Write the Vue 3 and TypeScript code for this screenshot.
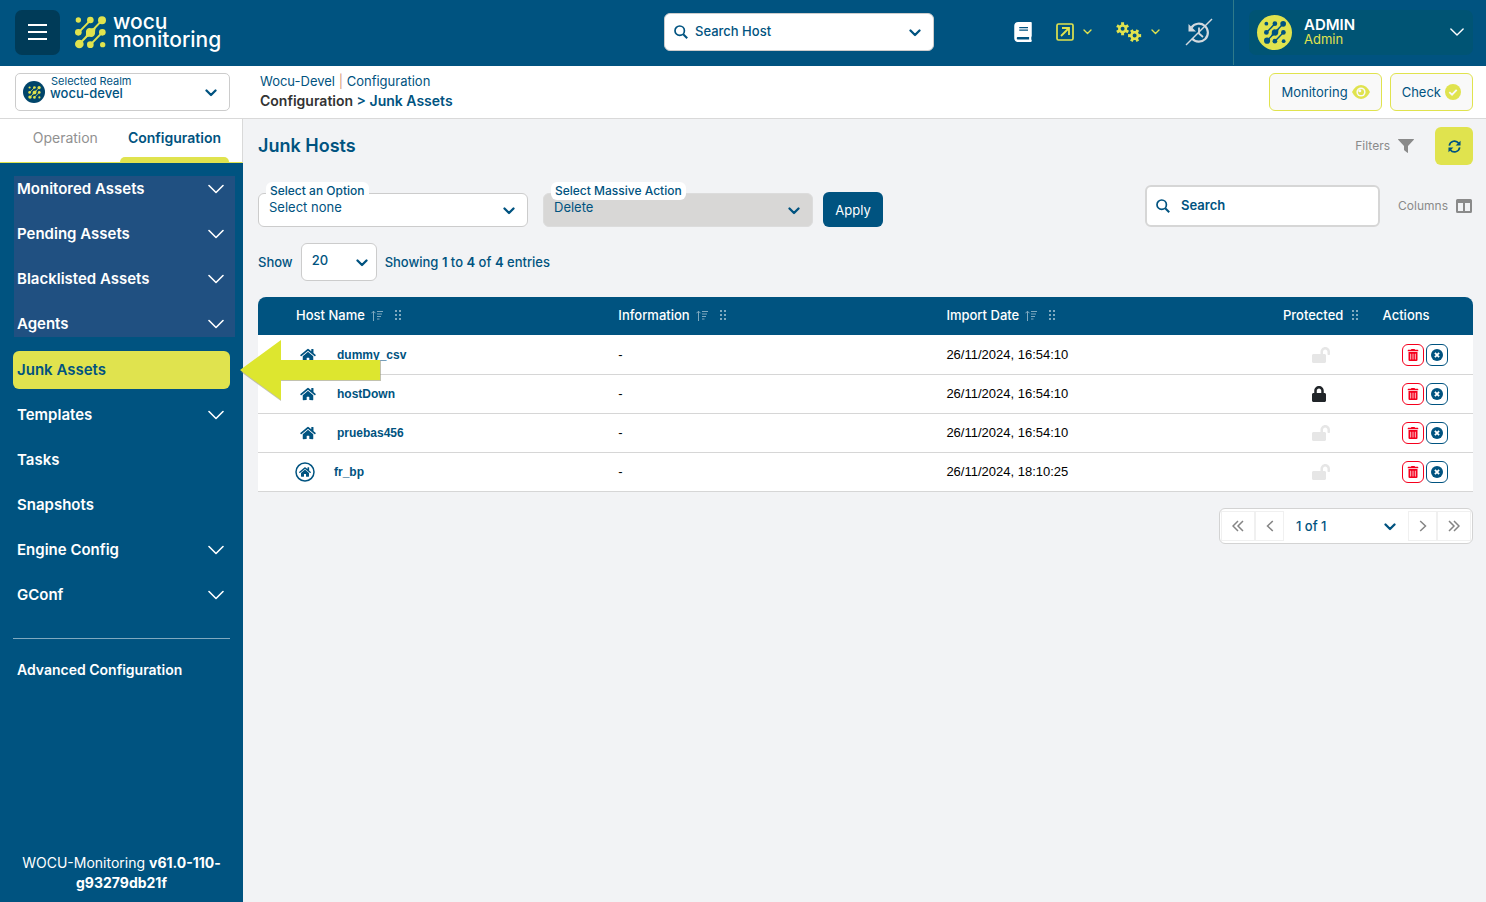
<script setup lang="ts">
import { ref } from 'vue'

interface MenuItem {
  label: string
  expandable: boolean
}
interface HostRow {
  name: string
  info: string
  date: string
  locked: boolean
  group: boolean
}
interface Column {
  label: string
  sortable: boolean
  draggable: boolean
}

const assetItems: MenuItem[] = [
  { label: 'Monitored Assets', expandable: true },
  { label: 'Pending Assets', expandable: true },
  { label: 'Blacklisted Assets', expandable: true },
  { label: 'Agents', expandable: true },
]
const otherItems: MenuItem[] = [
  { label: 'Templates', expandable: true },
  { label: 'Tasks', expandable: false },
  { label: 'Snapshots', expandable: false },
  { label: 'Engine Config', expandable: true },
  { label: 'GConf', expandable: true },
]
const columns: Column[] = [
  { label: 'Host Name', sortable: true, draggable: true },
  { label: 'Information', sortable: true, draggable: true },
  { label: 'Import Date', sortable: true, draggable: true },
  { label: 'Protected', sortable: false, draggable: true },
  { label: 'Actions', sortable: false, draggable: false },
]
const rows: HostRow[] = [
  { name: 'dummy_csv', info: '-', date: '26/11/2024, 16:54:10', locked: false, group: false },
  { name: 'hostDown', info: '-', date: '26/11/2024, 16:54:10', locked: true, group: false },
  { name: 'pruebas456', info: '-', date: '26/11/2024, 16:54:10', locked: false, group: false },
  { name: 'fr_bp', info: '-', date: '26/11/2024, 18:10:25', locked: false, group: true },
]

const search = ref('')

function gear(cx: number, cy: number, outer: number, inner: number, hole: number, phase: number): string {
  const teeth = 6
  const step = (Math.PI * 2) / teeth
  const pts: string[] = []
  for (let i = 0; i < teeth; i++) {
    const a = i * step + phase
    const corners: [number, number][] = [
      [inner, -0.3], [outer, -0.22], [outer, 0.22], [inner, 0.3],
    ]
    for (const [r, k] of corners) {
      const t = a + k * step
      pts.push(`${(cx + r * Math.cos(t)).toFixed(2)} ${(cy + r * Math.sin(t)).toFixed(2)}`)
    }
  }
  return `M${pts.join('L')}Z M${cx - hole} ${cy}a${hole} ${hole} 0 1 0 ${hole * 2} 0a${hole} ${hole} 0 1 0 ${-hole * 2} 0Z`
}
const gears = gear(6.6, 6.8, 6.7, 4.6, 2, 0.52) + gear(18.6, 13.6, 6.7, 4.6, 2, 0)
</script>

<template>
  <div class="app">
    <svg class="sprite" aria-hidden="true">
      <symbol id="mark" viewBox="0 0 93 97">
        <g stroke="currentColor" stroke-width="6" fill="none">
          <path d="M46 12 11 48M81 12 13 83M82 48 47 84" />
        </g>
        <g fill="currentColor">
          <circle cx="10" cy="11" r="8" />
          <circle cx="46" cy="11" r="10" />
          <circle cx="81" cy="12" r="12" />
          <circle cx="10" cy="48" r="10" />
          <path d="M33 45Q34 36 44 35Q56 37 62 32Q60 44 60 52Q58 61 49 62Q38 60 31 65Q34 55 33 45Z" />
          <circle cx="82" cy="48" r="10" />
          <circle cx="13" cy="83" r="13" />
          <circle cx="46" cy="85" r="10" />
          <circle cx="83" cy="85" r="8" />
        </g>
      </symbol>
      <symbol id="chev" viewBox="0 0 16 10">
        <path d="M1 1.5 8 8.5 15 1.5" fill="none" stroke="currentColor" stroke-width="1.6" stroke-linecap="round" stroke-linejoin="round" />
      </symbol>
      <symbol id="chev-mini" viewBox="0 0 9 6">
        <path d="M1 1 4.5 4.5 8 1" fill="none" stroke="currentColor" stroke-width="1.4" stroke-linecap="round" stroke-linejoin="round" />
      </symbol>
      <symbol id="chev-bold" viewBox="0 0 12 8">
        <path d="M1.5 1.5 6 6 10.5 1.5" fill="none" stroke="currentColor" stroke-width="2.3" stroke-linecap="round" stroke-linejoin="round" />
      </symbol>
      <symbol id="lens" viewBox="0 0 14 14">
        <circle cx="5.7" cy="5.7" r="4.7" fill="none" stroke="currentColor" stroke-width="1.7" />
        <path d="M9.2 9.2 13.2 13.2" stroke="currentColor" stroke-width="2" />
      </symbol>
      <symbol id="book" viewBox="0 0 448 512">
        <path fill="currentColor" d="M448 360V24c0-13.3-10.7-24-24-24H96C43 0 0 43 0 96v320c0 53 43 96 96 96h328c13.3 0 24-10.7 24-24v-16c0-7.5-3.5-14.3-8.9-18.7-4.2-15.4-4.2-59.3 0-74.7 5.4-4.3 8.9-11.1 8.9-18.6zM128 134c0-3.3 2.7-6 6-6h212c3.3 0 6 2.7 6 6v20c0 3.3-2.7 6-6 6H134c-3.3 0-6-2.7-6-6v-20zm0 64c0-3.3 2.7-6 6-6h212c3.3 0 6 2.7 6 6v20c0 3.3-2.7 6-6 6H134c-3.3 0-6-2.7-6-6v-20zm253.4 250H96c-17.7 0-32-14.3-32-32 0-17.6 14.4-32 32-32h285.4c-1.9 17.1-1.9 46.9 0 64z" />
      </symbol>
      <symbol id="external" viewBox="0 0 18 18">
        <rect x="1" y="1" width="16" height="16" rx="1.5" fill="none" stroke="currentColor" stroke-width="1.7" />
        <path d="M5 13 12.5 5.5M6 5h7v7" fill="none" stroke="currentColor" stroke-width="1.8" />
      </symbol>
      <symbol id="gears" viewBox="0 0 26 21">
        <path :d="gears" fill="currentColor" fill-rule="evenodd" />
      </symbol>
      <symbol id="history" viewBox="0 0 28 28">
        <path d="M6.5 9.5A9 9 0 1 1 7 20.5" fill="none" stroke="currentColor" stroke-width="2.2" />
        <path d="M3.5 6v7.500H11Z" fill="currentColor" />
        <path d="M14 9.5v6l4 3.5" fill="none" stroke="currentColor" stroke-width="1.8" />
        <path d="M1 27 27 1" stroke="currentColor" stroke-width="1.5" />
      </symbol>
      <symbol id="eye" viewBox="0 0 18 14">
        <path d="M0 7Q3.5 0 9 0T18 7Q14.5 14 9 14T0 7Z" fill="currentColor" />
        <circle cx="9" cy="7" r="4.6" fill="#f9f9f9" />
        <circle cx="9" cy="7" r="3.1" fill="currentColor" />
        <circle cx="7.8" cy="5.800" r="1.5" fill="#f9f9f9" />
      </symbol>
      <symbol id="check" viewBox="0 0 16 16">
        <circle cx="8" cy="8" r="8" fill="currentColor" />
        <path d="M4.3 8.2 7 10.7 11.7 5.8" fill="none" stroke="#f9f9f9" stroke-width="1.8" />
      </symbol>
      <symbol id="funnel" viewBox="0 0 16 14">
        <path d="M.5 0h15q.8 0 .3.8L10 7v6.5q0 .7-.6.3L6.500 11.500Q6 11 6 10.500V7L.2.8Q-.3 0 .5 0Z" fill="currentColor" />
      </symbol>
      <symbol id="sync" viewBox="0 0 14 14">
        <path d="M1.4 6A5.6 5.6 0 0 1 11.5 3.6M12.6 8A5.6 5.6 0 0 1 2.5 10.4" fill="none" stroke="currentColor" stroke-width="1.8" />
        <path d="M13.5.7V6H8.200ZM.5 13.300V8h5.300Z" fill="currentColor" />
      </symbol>
      <symbol id="columns" viewBox="0 0 16 14">
        <path fill-rule="evenodd" fill="currentColor" d="M1.5 0h13Q16 0 16 1.5v11q0 1.500-1.500 1.500h-13Q0 14 0 12.500v-11Q0 0 1.500 0ZM2 4v8h5V4ZM9 4v8h5V4Z" />
      </symbol>
      <symbol id="sort" viewBox="0 0 12 11">
        <path d="M2.5 11V1.2M.4 3.3 2.5 1.2 4.6 3.3M6 1.5h6M6 4h5M6 6.500h4M6 9h2.500" fill="none" stroke="currentColor" />
      </symbol>
      <symbol id="grip" viewBox="0 0 7 10">
        <path d="M0 0h2v2H0zM4 0h2v2H4zM0 4h2v2H0zM4 4h2v2H4zM0 8h2v2H0zM4 8h2v2H4z" fill="currentColor" />
      </symbol>
      <symbol id="home" viewBox="0 0 576 512">
        <path fill="currentColor" d="M280.37 148.26L96 300.11V464a16 16 0 0 0 16 16l112.06-.29a16 16 0 0 0 15.92-16V368a16 16 0 0 1 16-16h64a16 16 0 0 1 16 16v95.64a16 16 0 0 0 16 16.05L464 480a16 16 0 0 0 16-16V300L295.67 148.26a12.19 12.19 0 0 0-15.3 0zM571.6 251.47L488 182.56V44.05a12 12 0 0 0-12-12h-56a12 12 0 0 0-12 12v72.61L318.47 43a48 48 0 0 0-61 0L4.34 251.47a12 12 0 0 0-1.6 16.9l25.5 31A12 12 0 0 0 45.15 301l235.22-193.74a12.19 12.19 0 0 1 15.3 0L530.9 301a12 12 0 0 0 16.9-1.6l25.5-31a12 12 0 0 0-1.7-16.93z" />
      </symbol>
      <symbol id="home-group" viewBox="0 0 20 20">
        <circle cx="10" cy="10" r="9" fill="none" stroke="currentColor" stroke-width="1.5" />
        <use href="#home" x="4" y="4.5" width="12" height="11" />
      </symbol>
      <symbol id="lock" viewBox="0 0 448 512">
        <path fill="currentColor" d="M400 224h-24v-72C376 68.2 307.8 0 224 0S72 68.2 72 152v72H48c-26.5 0-48 21.5-48 48v192c0 26.5 21.5 48 48 48h352c26.5 0 48-21.5 48-48V272c0-26.5-21.5-48-48-48zm-104 0H152v-72c0-39.7 32.3-72 72-72s72 32.3 72 72v72z" />
      </symbol>
      <symbol id="unlock" viewBox="0 0 576 512">
        <path fill="currentColor" d="M423.5 0C339.5.3 272 69.5 272 153.5V224H48c-26.5 0-48 21.5-48 48v192c0 26.5 21.5 48 48 48h352c26.5 0 48-21.5 48-48V272c0-26.5-21.5-48-48-48h-48v-71.1c0-39.6 31.7-72.5 71.3-72.9 40-.4 72.7 32.1 72.7 72v80c0 13.3 10.7 24 24 24h32c13.3 0 24-10.7 24-24v-80C576 68 507.5-.3 423.5 0z" />
      </symbol>
      <symbol id="trash" viewBox="0 0 448 512">
        <path fill="currentColor" d="M32 464a48 48 0 0 0 48 48h288a48 48 0 0 0 48-48V128H32zm272-256a16 16 0 0 1 32 0v224a16 16 0 0 1-32 0zm-96 0a16 16 0 0 1 32 0v224a16 16 0 0 1-32 0zm-96 0a16 16 0 0 1 32 0v224a16 16 0 0 1-32 0zM432 32H312l-9.4-18.7A24 24 0 0 0 281.1 0H166.8a23.72 23.72 0 0 0-21.4 13.3L136 32H16A16 16 0 0 0 0 48v32a16 16 0 0 0 16 16h416a16 16 0 0 0 16-16V48a16 16 0 0 0-16-16z" />
      </symbol>
      <symbol id="cross" viewBox="0 0 12 12">
        <circle cx="6" cy="6" r="6" fill="currentColor" />
        <path d="M3.9 3.9 8.1 8.1M8.1 3.9 3.9 8.1" stroke="#fff" stroke-width="1.8" />
      </symbol>
      <symbol id="prev" viewBox="0 0 8 12">
        <path d="M6.8 1 1.5 6 6.8 11" fill="none" stroke="currentColor" stroke-width="1.5" />
      </symbol>
      <symbol id="next" viewBox="0 0 8 12">
        <path d="M1.2 1 6.5 6 1.2 11" fill="none" stroke="currentColor" stroke-width="1.5" />
      </symbol>
      <symbol id="first" viewBox="0 0 12 12">
        <path d="M6 1 1 6 6 11M11 1 6 6 11 11" fill="none" stroke="currentColor" stroke-width="1.5" />
      </symbol>
      <symbol id="last" viewBox="0 0 12 12">
        <path d="M6 1 11 6 6 11M1 1 6 6 1 11" fill="none" stroke="currentColor" stroke-width="1.5" />
      </symbol>
    </svg>

    <header class="topbar">
      <button class="burger" type="button" aria-label="Toggle menu"><span /><span /><span /></button>
      <a class="brand" href="#">
        <svg class="brand-mark"><use href="#mark" /></svg>
        <span class="brand-text">wocu<br />monitoring</span>
      </a>
      <div class="field host-search">
        <svg class="lens"><use href="#lens" /></svg>
        <select aria-label="Search Host"><option>Search Host</option></select>
        <svg class="caret"><use href="#chev-bold" /></svg>
      </div>
      <nav class="tools">
        <button type="button" aria-label="Documentation"><svg class="i-book"><use href="#book" /></svg></button>
        <button class="lime tool-ext" type="button" aria-label="Links">
          <svg class="i-ext"><use href="#external" /></svg><svg class="i-mini"><use href="#chev-mini" /></svg>
        </button>
        <button class="lime tool-gears" type="button" aria-label="Settings">
          <svg class="i-gears"><use href="#gears" /></svg><svg class="i-mini"><use href="#chev-mini" /></svg>
        </button>
        <button class="pale tool-history" type="button" aria-label="History"><svg class="i-history"><use href="#history" /></svg></button>
      </nav>
      <div class="account">
        <button class="user" type="button">
          <span class="avatar"><svg><use href="#mark" /></svg></span>
          <span class="user-text"><strong>ADMIN</strong><span>Admin</span></span>
          <svg class="i-chev"><use href="#chev" /></svg>
        </button>
      </div>
    </header>

    <div class="subbar">
      <div class="field realm">
        <span class="realm-badge"><svg><use href="#mark" /></svg></span>
        <label for="realm">Selected Realm</label>
        <select id="realm"><option>wocu-devel</option></select>
        <svg class="caret"><use href="#chev-bold" /></svg>
      </div>
      <div class="crumbs">
        <div class="crumb-top"><a href="#">Wocu-Devel</a> <i>|</i> <a href="#">Configuration</a></div>
        <div class="crumb-path"><span>Configuration</span> &gt; <a href="#">Junk Assets</a></div>
      </div>
      <button class="outline" type="button">Monitoring <svg class="i-eye"><use href="#eye" /></svg></button>
      <button class="outline" type="button">Check <svg class="i-check"><use href="#check" /></svg></button>
    </div>

    <div class="body">
      <aside class="sidebar">
        <div class="tabs">
          <button class="tab" type="button">Operation</button>
          <button class="tab active" type="button">Configuration</button>
        </div>
        <nav class="menu">
          <div class="menu-group marked">
            <a v-for="item in assetItems" :key="item.label" class="menu-item" href="#">
              {{ item.label }}
              <svg v-if="item.expandable" class="i-chev"><use href="#chev" /></svg>
            </a>
          </div>
          <a class="menu-item current" href="#">
            Junk Assets
            <svg class="pointer" viewBox="0 0 141 62">
              <path d="M1 32 41 1V21H141V41H41V61Z" fill="#9a9a78" opacity=".6" />
              <path d="M0 30 41 0V20H140V40H41V60Z" fill="#dde62f" />
            </svg>
          </a>
          <a v-for="item in otherItems" :key="item.label" class="menu-item" href="#">
            {{ item.label }}
            <svg v-if="item.expandable" class="i-chev"><use href="#chev" /></svg>
          </a>
        </nav>
        <hr />
        <a class="advanced" href="#">Advanced Configuration</a>
        <p class="version">WOCU-Monitoring <b>v61.0-110-g93279db21f</b></p>
      </aside>

      <main class="main">
        <div class="title-row">
          <h1>Junk Hosts</h1>
          <button class="ghost filters" type="button">Filters <svg class="i-16"><use href="#funnel" /></svg></button>
          <button class="refresh" type="button" aria-label="Refresh"><svg><use href="#sync" /></svg></button>
        </div>

        <div class="controls">
          <div class="field option">
            <label for="pick">Select an Option</label>
            <select id="pick"><option>Select none</option></select>
            <svg class="caret"><use href="#chev-bold" /></svg>
          </div>
          <div class="field option massive">
            <label for="massive">Select Massive Action</label>
            <select id="massive"><option>Delete</option></select>
            <svg class="caret"><use href="#chev-bold" /></svg>
          </div>
          <button class="apply" type="button">Apply</button>
          <div class="field finder">
            <svg class="lens"><use href="#lens" /></svg>
            <input v-model="search" type="text" placeholder="Search" aria-label="Search" />
          </div>
          <button class="ghost cols" type="button">Columns <svg class="i-16"><use href="#columns" /></svg></button>
        </div>

        <div class="show-row">
          <label for="size">Show</label>
          <div class="field size">
            <select id="size"><option>20</option></select>
            <svg class="caret"><use href="#chev-bold" /></svg>
          </div>
          <span>Showing <b>1</b> to <b>4</b> of <b>4</b> entries</span>
        </div>

        <table>
          <colgroup><col class="c1" /><col class="c2" /><col class="c3" /><col class="c4" /><col class="c5" /></colgroup>
          <thead>
            <tr>
              <th v-for="col in columns" :key="col.label" scope="col">
                <span class="th">
                  {{ col.label }}
                  <svg v-if="col.sortable" class="i-sort"><use href="#sort" /></svg>
                  <svg v-if="col.draggable" class="i-grip"><use href="#grip" /></svg>
                </span>
              </th>
            </tr>
          </thead>
          <tbody>
            <tr v-for="row in rows" :key="row.name">
              <td>
                <a class="host" :class="{ group: row.group }" href="#">
                  <svg><use :href="row.group ? '#home-group' : '#home'" /></svg>{{ row.name }}
                </a>
              </td>
              <td>{{ row.info }}</td>
              <td>{{ row.date }}</td>
              <td class="protect">
                <svg v-if="row.locked" class="i-lock"><use href="#lock" /></svg>
                <svg v-else class="i-unlock"><use href="#unlock" /></svg>
              </td>
              <td>
                <div class="acts">
                  <button class="del" type="button" aria-label="Delete"><svg><use href="#trash" /></svg></button>
                  <button class="rem" type="button" aria-label="Remove"><svg><use href="#cross" /></svg></button>
                </div>
              </td>
            </tr>
          </tbody>
        </table>

        <div class="pager">
          <button type="button" class="edge" aria-label="First page"><svg class="w12"><use href="#first" /></svg></button>
          <button type="button" aria-label="Previous page"><svg><use href="#prev" /></svg></button>
          <div class="field page">
            <select aria-label="Page"><option>1 of 1</option></select>
            <svg class="caret"><use href="#chev-bold" /></svg>
          </div>
          <button type="button" aria-label="Next page"><svg><use href="#next" /></svg></button>
          <button type="button" class="edge" aria-label="Last page"><svg class="w12"><use href="#last" /></svg></button>
        </div>
      </main>
    </div>
  </div>
</template>

<style>
body {
  margin: 0;
  background: #f2f3f5;
}
</style>

<style scoped>
.app {
  --blue: #005380;
  --lime: #e0e34e;
  display: flex;
  flex-direction: column;
  min-height: 100vh;
  font: 13px/20px Inter, "Liberation Sans", sans-serif;
  color: var(--blue);
}
.app *, .app *::before, .app *::after { box-sizing: border-box; }
.sprite { position: absolute; width: 0; height: 0; }
svg { display: block; flex: none; }
a { color: inherit; text-decoration: none; }
button {
  font: inherit;
  color: inherit;
  background: none;
  border: 0;
  padding: 0;
  cursor: pointer;
}

.field {
  position: relative;
  background: #fff;
  border: 1px solid #ccc;
  border-radius: 6px;
}
.field select, .field input {
  display: block;
  appearance: none;
  width: 100%;
  height: 100%;
  margin: 0;
  border: 0;
  outline: 0;
  background: transparent;
  font: inherit;
  color: inherit;
}
.field select { padding: 0 32px 0 10px; }
.caret {
  position: absolute;
  right: 12px;
  top: 50%;
  width: 12px;
  height: 8px;
  margin-top: -3px;
  pointer-events: none;
}
.lens {
  position: absolute;
  left: 9px;
  top: 50%;
  width: 14px;
  height: 14px;
  margin-top: -7px;
}

.topbar {
  display: flex;
  align-items: center;
  height: 66px;
  padding: 0 13px 2px 15px;
  background: var(--blue);
  color: #fff;
}
.burger {
  display: flex;
  flex-direction: column;
  align-items: center;
  justify-content: center;
  gap: 5px;
  width: 45px;
  height: 45px;
  border-radius: 7px;
  background: #003b58;
}
.burger span { width: 19px; height: 2px; background: #fff; }
.brand { display: flex; align-items: center; gap: 7px; margin-left: 15px; }
.brand-mark { width: 31px; height: 33px; color: var(--lime); }
.brand-text { font-size: 21px; line-height: 18px; font-weight: 500; padding-bottom: 2px; }
.host-search {
  width: 270px;
  height: 38px;
  margin-left: auto;
  margin-right: 80px;
  color: var(--blue);
  font-weight: 500;
}
.host-search select { padding: 0 32px 2px 30px; }
.tools { display: flex; align-items: center; }
.tools button { display: flex; align-items: center; }
.lime { color: var(--lime); }
.pale { color: #d3d9de; }
.i-book { width: 18px; height: 20px; }
.i-ext { width: 18px; height: 18px; }
.i-gears { width: 26px; height: 21px; }
.i-history { width: 28px; height: 28px; }
.i-mini { width: 9px; height: 6px; }
.tools .tool-ext { margin-left: 24px; gap: 9px; }
.tools .tool-gears { margin-left: 24px; gap: 9px; }
.tools .tool-history { margin-left: 25px; }
.account {
  display: flex;
  align-items: center;
  height: 66px;
  margin-left: 20px;
  padding-left: 15px;
  border-left: 1px solid #2f7a8a;
}
.user {
  display: flex;
  align-items: center;
  width: 224px;
  height: 45px;
  padding: 0 9px 0 8px;
  border-radius: 7px;
  background: #005474;
  text-align: left;
}
.avatar {
  display: flex;
  align-items: center;
  justify-content: center;
  width: 35px;
  height: 35px;
  border-radius: 50%;
  background: var(--lime);
  color: var(--blue);
}
.avatar svg { width: 22px; height: 23px; }
.user-text { display: flex; flex-direction: column; flex: 1; margin-left: 12px; line-height: 15px; color: var(--lime); }
.user-text strong { color: #fff; font-size: 15px; font-weight: 600; }
.i-chev { width: 16px; height: 10px; color: #fff; }
.user .i-chev { width: 14px; }

.subbar {
  display: flex;
  align-items: center;
  height: 53px;
  padding: 0 13px 0 15px;
  background: #fff;
  border-bottom: 1px solid #d9d9d9;
}
.realm { width: 215px; height: 38px; border-radius: 5px; font-weight: 500; }
.realm select { padding: 2px 32px 0 34px; }
.realm label { position: absolute; left: 35px; top: 1px; font-size: 11px; line-height: 12px; font-weight: 400; }
.realm-badge {
  position: absolute;
  left: 7px;
  top: 7px;
  display: flex;
  align-items: center;
  justify-content: center;
  width: 22px;
  height: 22px;
  border-radius: 50%;
  background: #00456b;
  color: var(--lime);
}
.realm-badge svg { width: 13px; height: 13px; }
.crumbs { flex: 1; margin-left: 30px; padding-bottom: 2px; }
.crumb-top i { font-style: normal; color: #d99a80; }
.crumb-path { font-size: 14px; font-weight: 600; }
.crumb-path span { color: #333; }
.outline {
  display: flex;
  align-items: center;
  gap: 4px;
  height: 38px;
  padding: 0 11px;
  margin-left: 8px;
  border: 1px solid var(--lime);
  border-radius: 6px;
  background: #f9f9f9;
}
.i-eye { width: 18px; height: 14px; color: var(--lime); }
.i-check { width: 16px; height: 16px; color: var(--lime); }

.body { display: flex; flex: 1; }
.sidebar {
  position: relative;
  z-index: 1;
  display: flex;
  flex-direction: column;
  flex: none;
  width: 243px;
  background: var(--blue);
  color: #fff;
}
.tabs {
  display: flex;
  justify-content: flex-end;
  gap: 14px;
  height: 44px;
  padding-right: 13px;
  background: #fff;
  border-right: 1px solid #d9d9d9;
  border-bottom: 1px solid var(--lime);
}
.tab { padding: 0 8px 5px; color: #919191; font-size: 14px; }
.tab.active { position: relative; color: var(--blue); font-weight: 600; }
.tab.active::after {
  content: "";
  position: absolute;
  left: 0;
  right: 0;
  bottom: 0;
  height: 5px;
  border-radius: 5px 5px 0 0;
  background: var(--lime);
}
.menu { display: flex; flex-direction: column; gap: 7px; padding: 7px 13px 0; }
.menu-group { position: relative; display: flex; flex-direction: column; gap: 7px; margin-bottom: 1px; }
.menu-group.marked::before {
  content: "";
  position: absolute;
  inset: 6px -5px 6px 1px;
  background: #205081;
}
.menu-item {
  position: relative;
  display: flex;
  align-items: center;
  justify-content: space-between;
  height: 38px;
  padding: 0 6px 0 4px;
  border-radius: 6px;
  font-size: 15px;
  font-weight: 600;
}
.menu-item.current { background: var(--lime); color: var(--blue); }
.pointer { position: absolute; left: calc(100% + 10px); top: -11px; width: 141px; height: 62px; }
hr { width: auto; height: 1px; margin: 24px 13px 0; border: 0; background: #80a9bf; }
.advanced { margin: 21px 17px 0; font-size: 14px; font-weight: 600; }
.version { margin: auto 13px 9px; padding-top: 20px; text-align: center; font-size: 14px; }

.main { flex: 1; min-width: 0; padding: 8px 13px 20px 15px; }
.title-row { display: flex; align-items: center; height: 38px; }
h1 { flex: 1; margin: 0; font-size: 18px; line-height: 24px; font-weight: 600; }
.ghost { display: flex; align-items: center; gap: 8px; color: #8a8a8a; font-size: 12px; }
.i-16 { width: 16px; height: 14px; }
.refresh {
  display: flex;
  align-items: center;
  justify-content: center;
  width: 38px;
  height: 38px;
  margin-left: 21px;
  border-radius: 6px;
  background: var(--lime);
}
.refresh svg { width: 13px; height: 13px; }

.controls { display: flex; align-items: flex-end; margin-top: 20px; }
.option { width: 270px; height: 34px; margin-right: 15px; }
.option select { padding-bottom: 6px; }
.option label {
  position: absolute;
  left: 7px;
  top: -12px;
  padding: 0 4px;
  border-radius: 6px;
  background: #fff;
  font-size: 12px;
  line-height: 18px;
  font-weight: 500;
}
.massive { margin-right: 10px; background: #d8d7d6; border-color: #dcdcdc; }
.apply {
  width: 60px;
  height: 35px;
  border-radius: 6px;
  background: var(--blue);
  color: #fff;
}
.finder {
  width: 235px;
  height: 42px;
  margin-left: auto;
  border: 2px solid #d6d6d6;
}
.finder input { padding: 0 10px 2px 34px; font-weight: 600; }
.finder input::placeholder { color: var(--blue); opacity: 1; }
.cols { height: 42px; margin-left: 18px; padding-right: 1px; }

.show-row { display: flex; align-items: center; gap: 8px; margin-top: 16px; font-weight: 500; }
.show-row b { font-weight: 600; }
.size { width: 76px; height: 38px; }
.size select { padding: 0 24px 4px 10px; }
.size .caret { right: 8px; }

table {
  width: 100%;
  margin-top: 16px;
  border-collapse: separate;
  border-spacing: 0;
  table-layout: fixed;
  font-family: "Liberation Sans", Arial, sans-serif;
  color: #000;
}
.c1 { width: 29%; }
.c2 { width: 27%; }
.c3 { width: 27.7%; }
.c4 { width: 8.2%; }
.c5 { width: 8.1%; }
th {
  height: 38px;
  padding: 0 0 2px 8px;
  background: var(--blue);
  color: #fff;
  font: 500 13px/20px Inter, "Liberation Sans", sans-serif;
  text-align: left;
  white-space: nowrap;
}
th:first-child { padding-left: 38px; border-radius: 8px 0 0 0; }
th:last-child { border-radius: 0 8px 0 0; }
.th { display: flex; align-items: center; color: #fff; }
.i-sort { width: 12px; height: 11px; margin-left: 6px; color: #7fa9bf; }
.i-grip { width: 7px; height: 10px; margin-left: 9px; color: #7fa9bf; }
.i-sort + .i-grip { margin-left: 12px; }
td {
  height: 39px;
  padding: 0 0 0 8px;
  background: #fff;
  border-bottom: 1px solid #d6d6d6;
}
tbody tr:first-child td { height: 40px; }
td:first-child { padding-left: 37px; }
.host { display: flex; align-items: center; gap: 21px; padding-left: 5px; font-size: 12px; font-weight: 700; color: var(--blue); }
.host svg { width: 16px; height: 14px; }
.host.group { gap: 19px; padding-left: 0; }
.host.group svg { width: 20px; height: 20px; }
td.protect { padding-left: 37px; }
.i-lock { width: 14px; height: 16px; color: #212529; }
.i-unlock { width: 18px; height: 16px; color: #e6e6e6; }
.acts { display: flex; gap: 2px; padding-left: 19px; }
.acts button {
  display: flex;
  align-items: center;
  justify-content: center;
  width: 22px;
  height: 22px;
  border: 1px solid;
  border-radius: 6px;
}
.del { color: #f5001d; }
.rem { color: var(--blue); }
.acts svg { width: 12px; height: 12px; }

.pager {
  display: flex;
  width: 254px;
  height: 36px;
  margin: 16px 0 0 auto;
  padding: 2px 1px;
  border: 1px solid #d3d3d3;
  border-radius: 6px;
  background: #fff;
}
.pager button {
  display: flex;
  align-items: center;
  justify-content: center;
  width: 29px;
  border: 1px solid #f0f0f0;
  color: #858585;
}
.pager button.edge { width: 34px; }
.pager svg { width: 8px; height: 12px; }
.pager svg.w12, .pager svg.caret { width: 12px; }
.pager svg.caret { height: 8px; }
.page { flex: 1; border: 0; font-weight: 500; }
.page select { padding-left: 12px; }
</style>
